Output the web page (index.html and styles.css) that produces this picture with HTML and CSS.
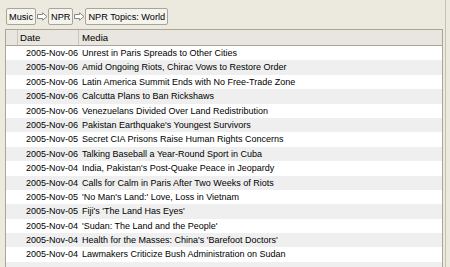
FILE: index.html
```html
<!DOCTYPE html>
<html lang="en">
<head>
  <meta charset="UTF-8" />
  <title>NPR Topics: World</title>
  <link rel="stylesheet" href="styles.css">
</head>
<body>
  <div class="window">
    <nav class="crumbs">
      <button class="crumb">Music</button>
      <svg class="arrow" width="11" height="9" viewBox="0 0 11 9"><path d="M0.5 2.5H5.5V0.8L10 4.5L5.5 8.2V6.5H0.5Z" fill="#fff" stroke="#8a877c" stroke-width="1"/></svg>
      <button class="crumb">NPR</button>
      <svg class="arrow" width="11" height="9" viewBox="0 0 11 9"><path d="M0.5 2.5H5.5V0.8L10 4.5L5.5 8.2V6.5H0.5Z" fill="#fff" stroke="#8a877c" stroke-width="1"/></svg>
      <button class="crumb">NPR Topics: World</button>
    </nav>

    <div class="list">
      <div class="row head">
        <span class="cell"></span>
        <span class="cell">Date</span>
        <span class="cell">Media</span>
      </div>
      <div id="rows"></div>
    </div>
  </div>

  <script>
    const items = [
      ["2005-Nov-06", "Unrest in Paris Spreads to Other Cities"],
      ["2005-Nov-06", "Amid Ongoing Riots, Chirac Vows to Restore Order"],
      ["2005-Nov-06", "Latin America Summit Ends with No Free-Trade Zone"],
      ["2005-Nov-06", "Calcutta Plans to Ban Rickshaws"],
      ["2005-Nov-06", "Venezuelans Divided Over Land Redistribution"],
      ["2005-Nov-06", "Pakistan Earthquake's Youngest Survivors"],
      ["2005-Nov-05", "Secret CIA Prisons Raise Human Rights Concerns"],
      ["2005-Nov-06", "Talking Baseball a Year-Round Sport in Cuba"],
      ["2005-Nov-04", "India, Pakistan's Post-Quake Peace in Jeopardy"],
      ["2005-Nov-04", "Calls for Calm in Paris After Two Weeks of Riots"],
      ["2005-Nov-05", "'No Man's Land:' Love, Loss in Vietnam"],
      ["2005-Nov-05", "Fiji's 'The Land Has Eyes'"],
      ["2005-Nov-04", "'Sudan: The Land and the People'"],
      ["2005-Nov-04", "Health for the Masses: China's 'Barefoot Doctors'"],
      ["2005-Nov-04", "Lawmakers Criticize Bush Administration on Sudan"],
      ["", ""]
    ];

    const container = document.getElementById("rows");
    items.forEach(function (item) {
      const row = document.createElement("div");
      row.className = "row";
      row.innerHTML = '<span class="cell"></span><span class="cell date">' + item[0] +
        '</span><span class="cell">' + item[1] + '</span>';
      container.appendChild(row);
    });
  </script>
</body>
</html>
```

FILE: styles.css
```css
body {
  margin: 0;
  background: #ece9df;
  font-family: Tahoma, "Liberation Sans", sans-serif;
  font-size: 9px;
  color: #000;
}
.window {
  height: 267px;
  width: 446px;
  border-right: 1px solid #c4c1b6;
  padding: 8px 0 0 5px;
  box-sizing: border-box;
  overflow: hidden;
}
.crumbs {
  display: flex;
  align-items: center;
  gap: 0;
  height: 17px;
  margin-left: 1px;
}
.crumb {
  font: inherit;
  font-size: 9.2px;
  height: 17px;
  padding: 0 2px;
  margin: 0;
  border: 1px solid #a9a699;
  border-radius: 2px;
  background: #f4f3ee;
  color: #000;
}
.arrow {
  margin: 0 0 0 1px;
}
.list {
  margin-top: 4px;
  margin-right: 2px;
  background: #fff;
  border-left: 1px solid #a9a699;
  border-right: 1px solid #a9a699;
  height: 300px;
}
.row {
  display: grid;
  grid-template-columns: 12px 61px 1fr;
  height: 14.4px;
  line-height: 14.4px;
  white-space: nowrap;
}
.row:nth-child(even) {
  background: #efefef;
}
.row .cell {
  overflow: hidden;
}
.date {
  text-align: right;
  padding-right: 1px;
}
.row .cell:last-child {
  padding-left: 3px;
}
.head {
  height: 15px;
  line-height: 15px;
  background: #e8e6de;
  border-top: 1px solid #a9a699;
  border-bottom: 1px solid #a9a699;
  font-size: 9.6px;
}
.head .cell {
  border-right: 1px solid #c9c7bd;
  padding-left: 2px;
}
.head .cell:first-child {
  padding-left: 0;
}
.head .cell:last-child {
  border-right: none;
  padding-left: 3px;
}
```
